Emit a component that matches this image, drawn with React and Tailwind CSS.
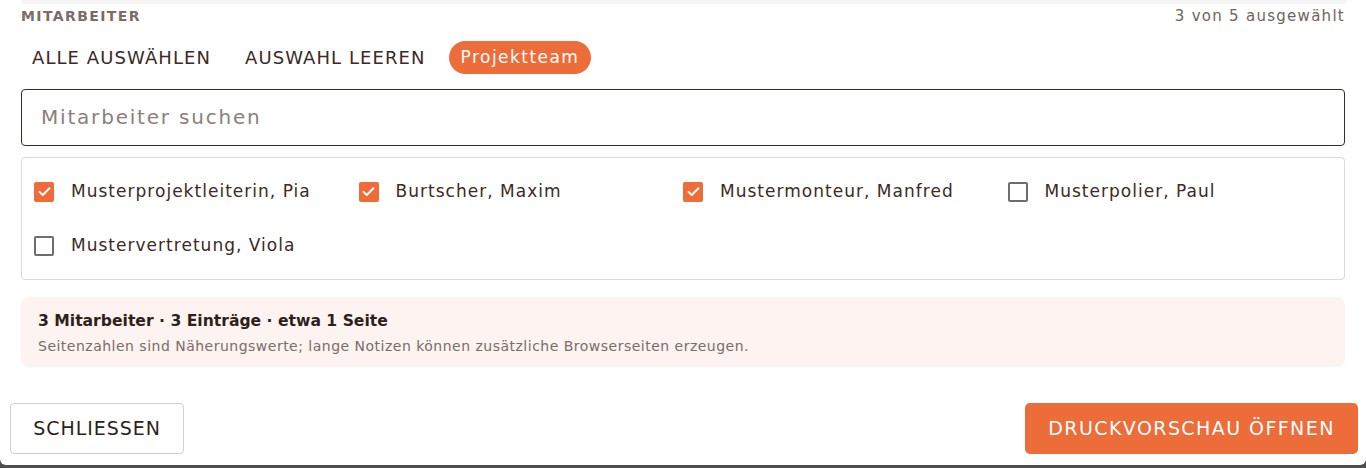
import React from 'react';

const employees = [
  { name: 'Musterprojektleiterin, Pia', checked: true },
  { name: 'Burtscher, Maxim', checked: true },
  { name: 'Mustermonteur, Manfred', checked: true },
  { name: 'Musterpolier, Paul', checked: false },
  { name: 'Mustervertretung, Viola', checked: false },
];

const CheckBox = ({ checked }) =>
  checked ? (
    <span className="flex h-[20px] w-[20px] shrink-0 items-center justify-center rounded-[2px] bg-[#ee6c3a]">
      <svg width="17" height="17" viewBox="0 0 24 24" fill="none" stroke="white" strokeWidth="2.8" strokeLinecap="round" strokeLinejoin="round">
        <path d="M5 12.5l4.5 4.5L19 7.5" />
      </svg>
    </span>
  ) : (
    <span className="h-[20px] w-[20px] shrink-0 rounded-[2px] border-2 border-[#6e6e6e] bg-white" />
  );

export default function App() {
  return (
    <div className="h-[468px] w-full overflow-hidden bg-[#4e4e4e] font-['DejaVu_Sans',sans-serif] text-[#3b2a25]">
      <div className="flex h-[465px] flex-col rounded-b-[6px] bg-white px-[21px]">
        <div className="mr-[-2px] h-[4px] shrink-0 rounded-b-[10px] bg-[#f5f5f5]" />

        <div className="mt-[1px] flex items-center justify-between">
          <span className="text-[14px] font-bold uppercase tracking-[0.1em] text-[#7a6d68]">Mitarbeiter</span>
          <span className="text-[15px] tracking-[0.085em] text-[#6f6460]">3 von 5 ausgewählt</span>
        </div>

        <div className="mt-[10px] flex items-center gap-[12px]">
          <button className="px-[11px] py-[6px] text-[18px] font-medium uppercase tracking-[0.06em] text-[#3b2a25]">Alle auswählen</button>
          <button className="px-[11px] py-[6px] text-[18px] font-medium uppercase tracking-[0.06em] text-[#3b2a25]">Auswahl leeren</button>
          <button className="h-[33px] rounded-full bg-[#ee6c3a] px-[12px] pt-[2px] text-[17px] tracking-[0.085em] text-white">Projektteam</button>
        </div>

        <div className="mt-[12px] flex h-[57px] items-center rounded-[4px] border-[1.5px] border-[#3b2a25] px-[19px]">
          <input
            className="w-full bg-transparent text-[20px] tracking-[0.09em] text-[#3b2a25] outline-none placeholder:text-[#8a7f7b]"
            placeholder="Mitarbeiter suchen"
          />
        </div>

        <div className="mt-[11px] grid h-[123px] grid-cols-4 content-start gap-y-[34px] rounded-[4px] border border-[#d9d9de] px-[12px] pt-[24px]">
          {employees.map((e) => (
            <label key={e.name} className="flex h-[20px] items-center gap-[17px]">
              <CheckBox checked={e.checked} />
              <span className="text-[17px] tracking-[0.06em] text-[#3b2a25]">{e.name}</span>
            </label>
          ))}
        </div>

        <div className="mt-[17px] flex h-[70px] flex-col justify-center rounded-[8px] bg-[#fdf3f0] px-[17px] pt-[4px]">
          <div className="text-[15.6px] font-bold text-[#2e1f1b]">3 Mitarbeiter · 3 Einträge · etwa 1 Seite</div>
          <div className="mt-[3px] text-[14px] tracking-[0.035em] text-[#7a6d68]">
            Seitenzahlen sind Näherungswerte; lange Notizen können zusätzliche Browserseiten erzeugen.
          </div>
        </div>

        <div className="mt-[36px] flex items-center justify-between ml-[-11px] mr-[-13px]">
          <button className="h-[51px] w-[174px] rounded-[4px] border border-[#cfcfcf] text-[19px] font-medium uppercase tracking-[0.05em] text-[#2e1f1b]">
            Schliessen
          </button>
          <button className="h-[51px] w-[333px] rounded-[5px] bg-[#ec6c3a] text-[19px] font-medium uppercase tracking-[0.075em] text-white">
            Druckvorschau öffnen
          </button>
        </div>
      </div>
    </div>
  );
}
